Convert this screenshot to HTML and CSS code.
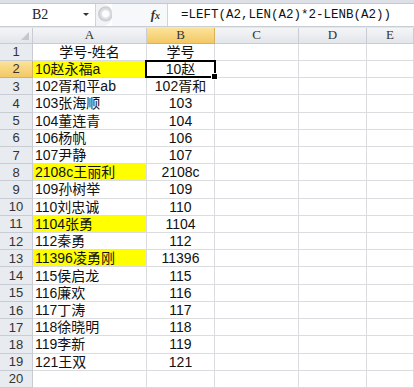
FILE: index.html
```html
<!DOCTYPE html>
<html lang="zh">
<head>
<meta charset="utf-8">
<link rel="stylesheet" href="styles.css">
</head>
<body>
<div class="app">
  <div class="topstrip"></div>
  <div class="fbar">
    <div class="namebox"><span class="nb-text">B2</span><span class="nb-arrow"></span></div>
    <div class="knob"></div>
    <div class="fxzone"><span class="fx">f<span class="fxx">x</span></span></div>
    <div class="formula">=LEFT(A2,LEN(A2)*2-LENB(A2))</div>
  </div>
  <div class="gap"></div>
  <div class="sheet">
    <div class="hd corner"><span class="tri"></span></div>
    <div class="hd col">A</div>
    <div class="hd col sel">B</div>
    <div class="hd col">C</div>
    <div class="hd col">D</div>
    <div class="hd col">E</div>

    <div class="hd rn">1</div><div class="c ctr">学号-姓名</div><div class="c ctr">学号</div><div class="c"></div><div class="c"></div><div class="c"></div>
    <div class="hd rn sel">2</div><div class="c yl">10赵永福a</div><div class="c ctr active">10赵</div><div class="c"></div><div class="c"></div><div class="c"></div>
    <div class="hd rn">3</div><div class="c">102胥和平ab</div><div class="c ctr">102胥和</div><div class="c"></div><div class="c"></div><div class="c"></div>
    <div class="hd rn">4</div><div class="c">103张海顺</div><div class="c ctr">103</div><div class="c"></div><div class="c"></div><div class="c"></div>
    <div class="hd rn">5</div><div class="c">104董连青</div><div class="c ctr">104</div><div class="c"></div><div class="c"></div><div class="c"></div>
    <div class="hd rn">6</div><div class="c">106杨帆</div><div class="c ctr">106</div><div class="c"></div><div class="c"></div><div class="c"></div>
    <div class="hd rn">7</div><div class="c">107尹静</div><div class="c ctr">107</div><div class="c"></div><div class="c"></div><div class="c"></div>
    <div class="hd rn">8</div><div class="c yl">2108c王丽利</div><div class="c ctr">2108c</div><div class="c"></div><div class="c"></div><div class="c"></div>
    <div class="hd rn">9</div><div class="c">109孙树举</div><div class="c ctr">109</div><div class="c"></div><div class="c"></div><div class="c"></div>
    <div class="hd rn">10</div><div class="c">110刘忠诚</div><div class="c ctr">110</div><div class="c"></div><div class="c"></div><div class="c"></div>
    <div class="hd rn">11</div><div class="c yl">1104张勇</div><div class="c ctr">1104</div><div class="c"></div><div class="c"></div><div class="c"></div>
    <div class="hd rn">12</div><div class="c">112秦勇</div><div class="c ctr">112</div><div class="c"></div><div class="c"></div><div class="c"></div>
    <div class="hd rn">13</div><div class="c yl">11396凌勇刚</div><div class="c ctr">11396</div><div class="c"></div><div class="c"></div><div class="c"></div>
    <div class="hd rn">14</div><div class="c">115侯启龙</div><div class="c ctr">115</div><div class="c"></div><div class="c"></div><div class="c"></div>
    <div class="hd rn">15</div><div class="c">116廉欢</div><div class="c ctr">116</div><div class="c"></div><div class="c"></div><div class="c"></div>
    <div class="hd rn">16</div><div class="c">117丁涛</div><div class="c ctr">117</div><div class="c"></div><div class="c"></div><div class="c"></div>
    <div class="hd rn">17</div><div class="c">118徐晓明</div><div class="c ctr">118</div><div class="c"></div><div class="c"></div><div class="c"></div>
    <div class="hd rn">18</div><div class="c">119李新</div><div class="c ctr">119</div><div class="c"></div><div class="c"></div><div class="c"></div>
    <div class="hd rn">19</div><div class="c">121王双</div><div class="c ctr">121</div><div class="c"></div><div class="c"></div><div class="c"></div>
    <div class="hd rn">20</div><div class="c"></div><div class="c"></div><div class="c"></div><div class="c"></div><div class="c"></div>
  </div>
</div>
</body>
</html>
```

FILE: styles.css
```css
* { box-sizing: border-box; }
html, body { margin: 0; padding: 0; background: #fff; }
body { width: 414px; height: 388px; overflow: hidden; }
.app { display: flex; flex-direction: column; width: 414px; height: 388px; overflow: hidden; }

.topstrip { height: 4px; background: #dde1e7; border-bottom: 1px solid #c5cad2; }
.fbar { height: 22px; display: flex; align-items: stretch; background: #fff; }
.namebox { width: 96px; position: relative; display: flex; align-items: center; border-right: 1px solid #d0d4da; }
.nb-text { font-family: "Liberation Serif", serif; font-size: 14px; color: #222; padding-left: 32px; flex: 1; }
.nb-arrow { width: 0; height: 0; border-left: 3px solid transparent; border-right: 3px solid transparent; border-top: 3px solid #333; margin-right: 6px; }
.knob { width: 16px; background: radial-gradient(circle at 60% 45%, #fdfdfd 0 3px, #e4e6ea 4px, #c8ccd2 7px, #f2f3f5 8px); border-radius: 0 9px 9px 0; }
.fxzone { width: 56px; display: flex; align-items: center; justify-content: flex-end; padding-right: 7px; background: #f7f8fa; border-right: 1px solid #d0d4da; }
.fx { font-family: "Liberation Serif", serif; font-style: italic; font-weight: bold; font-size: 13px; color: #333; }
.fxx { font-size: 10px; }
.formula { flex: 1; display: flex; align-items: center; padding-left: 13px; font-family: "Liberation Mono", monospace; font-size: 12.5px; color: #111; white-space: nowrap; }
.gap { height: 2px; background: #e3e6ea; border-top: 1px solid #c9cdd4; }

.sheet { display: grid; grid-template-columns: 33px 114px 68px 84px 68px 47px; grid-template-rows: 16px; grid-auto-rows: 17.22px; }
.hd { background: linear-gradient(#f4f5f7, #e3e6ea); border-right: 1px solid #c9cdd3; border-bottom: 1px solid #c9cdd3; color: #333; display: flex; align-items: center; justify-content: center; }
.col { font-family: "Liberation Serif", serif; font-size: 13px; }
.rn { font-family: "Liberation Sans", sans-serif; font-size: 13px; background: #e8ebef; }
.hd.sel { background: linear-gradient(#fbe39a, #f3c864); border-color: #d8b25a; }
.corner { position: relative; }
.tri { position: absolute; right: 3px; bottom: 3px; width: 0; height: 0; border-left: 8px solid transparent; border-bottom: 8px solid #c4c8ce; }

.c { border-right: 1px solid #dadcdf; border-bottom: 1px solid #dadcdf; font-family: "Liberation Sans", "Noto Sans CJK SC", sans-serif; font-size: 14px; color: #111; display: flex; align-items: center; padding-left: 2px; white-space: nowrap; line-height: 16px; }
.c.ctr { justify-content: center; padding-left: 0; }
.c.yl { background: #ffff00; }
.c.active { position: relative; }
.c.active::after { content: ""; position: absolute; left: -2px; top: -1px; right: -2px; bottom: -1px; border: 2px solid #000; }
.c.active::before { content: ""; position: absolute; right: -4px; bottom: -3px; width: 5px; height: 5px; background: #000; border: 1px solid #fff; z-index: 2; }
```
